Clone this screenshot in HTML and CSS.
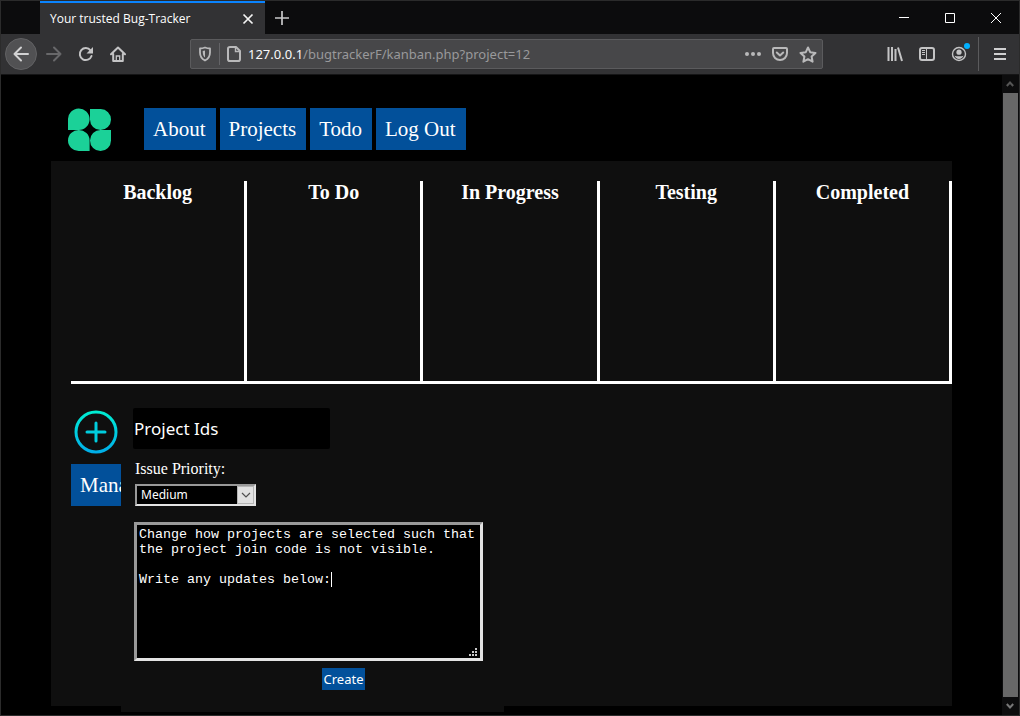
FILE: index.html
```html
<!DOCTYPE html>
<html lang="en">
<head>
<meta charset="utf-8">
<title>Your trusted Bug-Tracker</title>
<link rel="stylesheet" href="styles.css">
</head>
<body>
<div class="window">
  <header class="titlebar">
    <div class="tab">
      <span class="tab-title">Your trusted Bug-Tracker</span>
      <button class="icon-btn tab-close" aria-label="Close tab"><svg width="12" height="12" viewBox="0 0 12 12"><path d="M1.500 1.500l9 9M10.500 1.500l-9 9" stroke="#f4f4f4" stroke-width="1.700"/></svg></button>
    </div>
    <button class="icon-btn new-tab" aria-label="New tab"><svg width="14" height="14" viewBox="0 0 14 14"><path d="M7 0v14M0 7h14" stroke="#c8c8c9" stroke-width="1.700"/></svg></button>
    <div class="window-controls">
      <button class="icon-btn" aria-label="Minimize"><svg width="10" height="10" viewBox="0 0 10 10"><path d="M0 4.500h10" stroke="#fff"/></svg></button>
      <button class="icon-btn" aria-label="Maximize"><svg width="10" height="10" viewBox="0 0 10 10"><path d="M.5.5h9v9h-9z" fill="none" stroke="#fff"/></svg></button>
      <button class="icon-btn" aria-label="Close"><svg width="10" height="10" viewBox="0 0 10 10"><path d="M0 0l10 10M10 0L0 10" stroke="#fff"/></svg></button>
    </div>
  </header>

  <div class="toolbar">
    <div class="nav-buttons">
      <button class="icon-btn back" aria-label="Back"><svg width="16" height="16" viewBox="0 0 16 16"><path d="M15 8H1.500M8 1.500L1.500 8 8 14.500" fill="none" stroke="#d2d2d3" stroke-width="2" stroke-linecap="round" stroke-linejoin="round"/></svg></button>
      <button class="icon-btn" aria-label="Forward"><svg width="16" height="16" viewBox="0 0 16 16"><path d="M1 8h13.500M8 1.500L14.500 8 8 14.500" fill="none" stroke="#68686a" stroke-width="2" stroke-linecap="round" stroke-linejoin="round"/></svg></button>
      <button class="icon-btn" aria-label="Reload"><svg width="16" height="16" viewBox="0 0 16 16"><path d="M12.500 4.300A6 6 0 1 0 13.500 10" fill="none" stroke="#c4c4c5" stroke-width="2" stroke-linecap="round"/><path d="M15 1v6.500H8.500z" fill="#c4c4c5"/></svg></button>
      <button class="icon-btn" aria-label="Home"><svg width="16" height="16" viewBox="0 0 16 16"><path d="M1 8.300L8 1.500l7 6.800M3.200 8v7h9.600V8" fill="none" stroke="#c4c4c5" stroke-width="2" stroke-linecap="round" stroke-linejoin="round"/><path d="M6.300 15v-5h3.400v5z" fill="none" stroke="#c4c4c5" stroke-width="1.300"/></svg></button>
    </div>
    <div class="address">
      <svg width="14" height="16" viewBox="0 0 14 16"><path d="M7 1.500c2 .8 3.800 1 5 1v4c0 4-2 6.500-5 8-3-1.500-5-4-5-8v-4c1.200 0 3-.2 5-1z" fill="none" stroke="#b9b9ba" stroke-width="1.800" stroke-linejoin="round"/><path d="M7 4.500v7C5.300 10.300 4.700 8.500 4.700 5z" fill="#b9b9ba"/></svg>
      <span class="address-sep"></span>
      <svg width="14" height="16" viewBox="0 0 14 16"><path d="M3 1h6l4 4v8.200c0 1-.8 1.800-1.800 1.800H2.800C1.800 15 1 14.200 1 13.200V2.800C1 1.800 1.800 1 3 1z" fill="none" stroke="#b9b9ba" stroke-width="2" stroke-linejoin="round"/><path d="M8.500 1v4.500H13" fill="none" stroke="#b9b9ba" stroke-width="1.400"/></svg>
      <span class="url"><span class="host">127.0.0.1</span>/bugtrackerF/kanban.php?project=12</span>
      <span class="address-actions">
        <button class="icon-btn" aria-label="Page actions"><svg width="16" height="16" viewBox="0 0 16 16" fill="#b9b9ba"><circle cx="2" cy="8" r="2"/><circle cx="8" cy="8" r="2"/><circle cx="14" cy="8" r="2"/></svg></button>
        <button class="icon-btn" aria-label="Save to Pocket"><svg width="16" height="16" viewBox="0 0 16 16" fill="none" stroke="#b9b9ba" stroke-width="2" stroke-linecap="round" stroke-linejoin="round"><path d="M2 2h12c.6 0 1 .4 1 1v4a7 7 0 0 1-14 0V3c0-.6.4-1 1-1z"/><path d="M4.800 6.500L8 9.500l3.200-3"/></svg></button>
        <button class="icon-btn" aria-label="Bookmark"><svg width="18" height="17" viewBox="0 0 18 17"><path d="M9 1.500l2.200 4.700 5.300.7-3.900 3.600 1 5.200L9 13.200l-4.600 2.500 1-5.200-3.900-3.600 5.300-.7z" fill="none" stroke="#b9b9ba" stroke-width="2" stroke-linejoin="round"/></svg></button>
      </span>
    </div>
    <div class="tools">
      <button class="icon-btn" aria-label="Library"><svg width="16" height="16" viewBox="0 0 16 16" stroke="#c4c4c5" stroke-width="2"><path d="M1.500 1v14M5 1v14M8.500 3v12M11 1.500L15 15" fill="none"/></svg></button>
      <button class="icon-btn" aria-label="Sidebars"><svg width="16" height="16" viewBox="0 0 16 16"><rect x="1" y="2" width="14" height="12" rx="2" fill="none" stroke="#c4c4c5" stroke-width="2"/><path d="M7.500 2v12M3 4.500h3M3 6.500h3M3 8.500h3" stroke="#c4c4c5"/></svg></button>
      <button class="icon-btn account" aria-label="Account"><svg width="16" height="16" viewBox="0 0 16 16"><circle cx="8" cy="8" r="6.500" fill="none" stroke="#c4c4c5" stroke-width="1.400"/><circle cx="8" cy="6.200" r="2.600" fill="#c4c4c5"/><path d="M3.500 9.700c1 .4 2 .6 4.500.6s3.500-.2 4.500-.6c-.8 2-2.400 3.200-4.500 3.200s-3.700-1.200-4.500-3.200z" fill="#c4c4c5"/></svg><span class="dot"></span></button>
      <span class="tools-sep"></span>
      <button class="icon-btn menu" aria-label="Menu"><svg width="12" height="12" viewBox="0 0 12 12"><path d="M0 1h12M0 6h12M0 11h12" stroke="#d0d0d1" stroke-width="2"/></svg></button>
    </div>
  </div>

  <div class="viewport">
    <div class="page">
      <nav class="site-nav">
        <svg class="logo" width="44" height="44" viewBox="0 0 44 44" fill="#1bd198"><path d="M0 22V11.500A10.800 10.800 0 1 1 10.800 22zM22 1h10.700A10.500 10.500 0 1 1 22 11.500zM0 32.500A10.800 10.500 0 0 1 21.600 32.500V43H10.800A10.800 10.500 0 0 1 0 32.500zM43 22v10.500A10.500 10.500 0 1 1 32.500 22z"/></svg>
        <a class="btn" href="#about">About</a>
        <a class="btn" href="#projects">Projects</a>
        <a class="btn" href="#todo">Todo</a>
        <a class="btn" href="#logout">Log Out</a>
      </nav>

      <main class="panel">
        <div class="board">
          <section class="column"><h2>Backlog</h2></section>
          <section class="column"><h2>To Do</h2></section>
          <section class="column"><h2>In Progress</h2></section>
          <section class="column"><h2>Testing</h2></section>
          <section class="column"><h2>Completed</h2></section>
        </div>
        <div class="actions">
          <button class="icon-btn add" aria-label="Add issue"><svg width="44" height="44" viewBox="0 0 44 44"><defs><linearGradient id="ring" x1="0" y1="0" x2="0" y2="44" gradientUnits="userSpaceOnUse"><stop offset="0" stop-color="#00efd1"/><stop offset="1" stop-color="#00acea"/></linearGradient></defs><g fill="none" stroke="url(#ring)" stroke-width="3"><circle cx="22" cy="22" r="20"/><path d="M22 13v18M13 22h18" stroke="#00cdde" stroke-linecap="round"/></g></svg></button>
          <a class="btn" href="#manage">Manage</a>

          <form class="issue-form">
            <input class="issue-title" type="text" aria-label="Issue title" value="Project Ids">
            <label class="priority-label" for="priority">Issue Priority:</label>
            <span class="select-wrap">
              <select id="priority"><option>Low</option><option selected>Medium</option><option>High</option></select>
              <span class="select-arrow"><svg width="10" height="6" viewBox="0 0 10 6"><path d="M1 1l4 4 4-4" fill="none" stroke="#505050" stroke-width="1.200"/></svg></span>
            </span>
            <span class="text-wrap">
              <textarea class="details" aria-label="Issue details" spellcheck="false">Change how projects are selected such that the project join code is not visible.

Write any updates below:</textarea>
              <span class="caret"></span>
              <svg class="grip" width="8" height="8" viewBox="0 0 8 8" fill="#c9c9c9"><path d="M6 0h2v2H6zM3 3h2v2H3zM6 3h2v2H6zM0 6h2v2H0zM3 6h2v2H3zM6 6h2v2H6z"/></svg>
            </span>
            <button class="create" type="button">Create</button>
          </form>
        </div>
      </main>
    </div>
    <div class="scrollbar">
      <button class="icon-btn" aria-label="Scroll up"><svg width="8" height="6" viewBox="0 0 8 6"><path d="M.8 5L4 1.500 7.200 5" fill="none" stroke="#555" stroke-width="2"/></svg></button>
      <span class="thumb"></span>
      <button class="icon-btn" aria-label="Scroll down"><svg width="8" height="6" viewBox="0 0 8 6"><path d="M.8 1L4 4.500 7.200 1" fill="none" stroke="#777" stroke-width="2"/></svg></button>
    </div>
  </div>
</div>
</body>
</html>
```
FILE: styles.css
```css
* { box-sizing: border-box; }

body {
  margin: 0;
  background: #000;
  color: #fff;
  font-family: "Liberation Serif", "Times New Roman", serif;
}

button, input, select { font-family: "Noto Sans", sans-serif; }

.window {
  display: flex;
  flex-direction: column;
  min-height: 100vh;
  border: 1px solid #2b2b2b;
}

.icon-btn {
  display: inline-flex;
  align-items: center;
  justify-content: center;
  flex: none;
  padding: 0;
  border: 0;
  background: none;
}

/* Browser window */
.titlebar {
  display: flex;
  height: 33px;
  padding-left: 39px;
  background: #0c0c0d;
}

.tab {
  display: flex;
  align-items: center;
  justify-content: space-between;
  width: 225px;
  padding: 0 11px 0 10px;
  border-top: 2px solid #0a84ff;
  background: #323234;
  font: 12px "Open Sans", sans-serif;
}

.new-tab { width: 34px; }

.window-controls {
  display: flex;
  margin-left: auto;
}

.window-controls .icon-btn { width: 46px; }

.toolbar {
  display: flex;
  align-items: center;
  height: 40px;
  background: #323234;
}

.nav-buttons { display: flex; align-items: center; padding-left: 4px; }
.nav-buttons .icon-btn { width: 32px; height: 32px; }
.nav-buttons .back {
  margin-right: 1px;
  border: 1px solid #626264;
  border-radius: 50%;
  background: #515153;
}

.address {
  display: flex;
  align-items: center;
  flex: 1;
  height: 30px;
  margin: 0 64px 0 56px;
  padding: 0 5px 0 7px;
  border: 1px solid #5b5b5d;
  border-radius: 2px;
  background: #474749;
}

.address-sep {
  width: 1px;
  height: 22px;
  margin: 0 7px;
  background: #646467;
}

.url {
  flex: 1;
  padding-left: 7px;
  color: #99999b;
  font: 13px "Noto Sans", sans-serif;
  white-space: nowrap;
}

.host { color: #f9f9fa; }

.address-actions { display: flex; gap: 11px; }

.tools { display: flex; align-items: center; gap: 16px; }
.account { position: relative; }
.dot {
  position: absolute;
  top: -3px;
  right: -3px;
  width: 6px;
  height: 6px;
  border-radius: 50%;
  background: #00b0ff;
}
.tools-sep { width: 1px; height: 34px; margin-left: -5px; background: #5b5b5d; }
.menu { width: 38px; margin-left: -14px; }

.viewport { display: flex; flex: 1; border-top: 1px solid #151516; }

.scrollbar {
  display: flex;
  flex-direction: column;
  flex: none;
  width: 17px;
  padding-right: 1px;
  background: #0c0c0d;
}
.scrollbar .icon-btn { height: 18px; }
.thumb { flex: 1; margin-left: 1px; background: #686868; }

/* Page */
.page { flex: 1; min-width: 0; padding: 33px 50px 9px; }

.site-nav {
  display: flex;
  align-items: center;
  gap: 4px;
  margin-bottom: 11px;
  padding-left: 17px;
}
.logo { margin: 0 28px -2px 0; }

.btn {
  display: block;
  padding: 8px 10px 8px 9px;
  background: #02509a;
  color: #fff;
  font-size: 21px;
  line-height: 26px;
  text-decoration: none;
}

.panel {
  height: 545px;
  padding: 20px 0 0 20px;
  background: #0f0f0f;
}

.board {
  display: grid;
  grid-template-columns: repeat(5, 1fr);
  border-bottom: 3px solid #fff;
}
.column {
  min-height: 200px;
  border-right: 3px solid #fff;
  text-align: center;
}
.column h2 { margin: 0; font-size: 20px; line-height: 22px; }

.actions {
  position: relative;
  display: flex;
  flex-direction: column;
  align-items: flex-start;
  gap: 10px;
  padding-top: 26px;
}
.add { margin-left: 3px; }

/* New issue form, opened over the board's actions */
.issue-form {
  position: absolute;
  top: 12px;
  left: 50px;
  display: flex;
  flex-direction: column;
  align-items: flex-start;
  width: 383px;
  padding: 12px 20px 22px 12px;
  background: #0f0f0f;
}

.issue-title {
  width: 197px;
  height: 41px;
  padding: 0 1px;
  border: 0;
  border-radius: 2px;
  background: #000;
  color: #fff;
  font-size: 17px;
}

.priority-label {
  margin: 11px 0 6px 2px;
  font-size: 16px;
  line-height: 18px;
}

.select-wrap { position: relative; width: 121px; margin-left: 2px; }
.select-wrap select {
  display: block;
  appearance: none;
  width: 100%;
  height: 22px;
  padding: 0 4px;
  border: 2px solid;
  border-color: #999 #e3e3e3 #e3e3e3 #999;
  border-radius: 0;
  background: #000;
  color: #fff;
  font-size: 12px;
  line-height: 18px;
}
.select-arrow {
  position: absolute;
  top: 2px;
  right: 2px;
  display: flex;
  align-items: center;
  justify-content: center;
  width: 17px;
  height: 18px;
  border: 1px solid #b5b5b5;
  background: #e1e1e1;
  pointer-events: none;
}

.text-wrap { position: relative; width: 349px; margin: 16px 0 7px 1px; }
.details {
  display: block;
  width: 100%;
  height: 139px;
  padding: 2px;
  border: 3px solid;
  border-color: #999 #e3e3e3 #e3e3e3 #999;
  background: #000;
  color: #fff;
  font-family: "Liberation Mono", "Courier New", monospace;
  line-height: 15px;
  overflow: hidden;
  resize: none;
}
.caret {
  position: absolute;
  top: 50px;
  left: 197px;
  width: 1px;
  height: 15px;
  background: #fff;
}
.grip { position: absolute; right: 6px; bottom: 5px; }

.create {
  align-self: center;
  height: 22px;
  margin-left: 70px;
  padding: 0 2px;
  border: 0;
  background: #02509a;
  color: #fff;
  font-size: 13px;
  line-height: 22px;
}
```
